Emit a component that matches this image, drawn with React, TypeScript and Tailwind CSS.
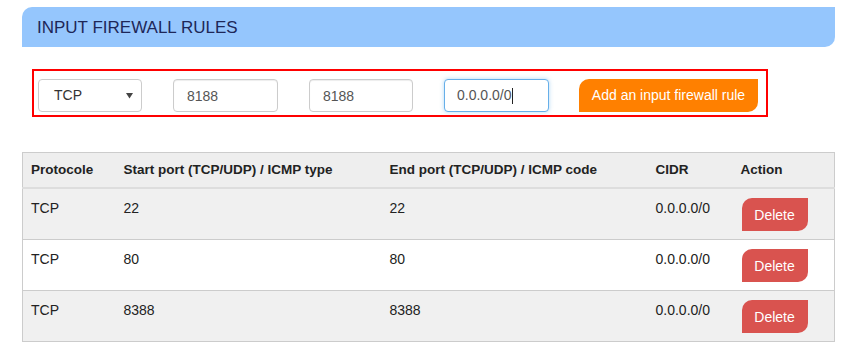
const rules = [
    { protocol: 'TCP', start: '22', end: '22', cidr: '0.0.0.0/0' },
    { protocol: 'TCP', start: '80', end: '80', cidr: '0.0.0.0/0' },
    { protocol: 'TCP', start: '8388', end: '8388', cidr: '0.0.0.0/0' },
]

function TextField({ value, width }: { value: string; width: string }) {
    return (
        <input
            readOnly
            value={value}
            className={`${width} h-[33px] rounded-[4px] border border-[#cccccc] bg-white pl-[13px] text-[14px] text-[#555555] shadow-[inset_0_1px_1px_rgba(0,0,0,0.075)] outline-none`}
        />
    )
}

export default function App() {
    return (
        <div className="min-h-screen bg-white font-['Liberation_Sans',Arial,sans-serif]">
            <div className="ml-[22px] w-[813px] pt-[7px]">
                {/* section header */}
                <div className="flex h-[40px] items-center rounded-tl-[10px] rounded-br-[10px] bg-[#95c6fd] pl-[15px]">
                    <h2 className="text-[17px] leading-none text-[#1e2758]">INPUT FIREWALL RULES</h2>
                </div>

                {/* add rule form */}
                <div className="ml-[10px] mt-[22px] flex h-[48px] w-[736px] items-start border-2 border-[#ff0000] pl-[4px] pt-[8px]">
                    <div className="flex h-[33px] w-[104px] items-center justify-between rounded-[4px] border border-[#cccccc] bg-white pl-[15px] pr-[8px] text-[14px] text-[#333333]">
                        <span>TCP</span>
                        <svg width="7" height="6" viewBox="0 0 7 6">
                            <path d="M0 0 H7 L3.5 5.5 Z" fill="#444444" />
                        </svg>
                    </div>
                    <div className="ml-[31px]">
                        <TextField value="8188" width="w-[105px]" />
                    </div>
                    <div className="ml-[31px]">
                        <TextField value="8188" width="w-[104px]" />
                    </div>
                    <div className="ml-[31px] flex h-[33px] w-[105px] items-center rounded-[4px] border border-[#66afe9] bg-white pl-[12px] text-[14px] text-[#555555] shadow-[0_0_4px_rgba(102,175,233,0.5)]">
                        <span>0.0.0.0/0</span>
                        <span className="h-[16px] w-px bg-[#222222]" />
                    </div>
                    <button className="ml-[30px] flex h-[33px] w-[179px] items-center justify-center rounded-tl-[10px] rounded-br-[10px] bg-[#ff8000] text-[14px] text-white">
                        Add an input firewall rule
                    </button>
                </div>

                {/* rules table */}
                <table className="mt-[35px] w-[813px] table-fixed border-collapse border border-[#cccccc] text-[14px] leading-[20px] text-[#222222]">
                    <colgroup>
                        <col className="w-[93px]" />
                        <col className="w-[266px]" />
                        <col className="w-[266px]" />
                        <col className="w-[85px]" />
                        <col />
                    </colgroup>
                    <thead>
                        <tr className="border-b-2 border-[#dddddd] bg-[#eeeeee] text-left">
                            <th className="px-[8px] py-[7px] text-[13.5px] font-bold">Protocole</th>
                            <th className="px-[8px] py-[7px] text-[13.5px] font-bold">Start port (TCP/UDP) / ICMP type</th>
                            <th className="px-[8px] py-[7px] text-[13.5px] font-bold">End port (TCP/UDP) / ICMP code</th>
                            <th className="px-[8px] py-[7px] text-[13.5px] font-bold">CIDR</th>
                            <th className="px-[8px] py-[7px] text-[13.5px] font-bold">Action</th>
                        </tr>
                    </thead>
                    <tbody>
                        {rules.map((rule, i) => (
                            <tr
                                key={i}
                                className={`border-b border-[#cccccc] align-top ${i % 2 === 0 ? 'bg-[#f0f0f0]' : 'bg-white'}`}
                            >
                                <td className="px-[8px] pt-[9px] pb-[8px]">{rule.protocol}</td>
                                <td className="px-[8px] pt-[9px] pb-[8px]">{rule.start}</td>
                                <td className="px-[8px] pt-[9px] pb-[8px]">{rule.end}</td>
                                <td className="px-[8px] pt-[9px] pb-[8px]">{rule.cidr}</td>
                                <td className="px-[8px] pt-[9px] pb-[8px]">
                                    <button className="ml-px flex h-[33px] w-[66px] items-center justify-center rounded-tl-[10px] rounded-br-[10px] bg-[#d9534f] text-[14px] text-white">
                                        Delete
                                    </button>
                                </td>
                            </tr>
                        ))}
                    </tbody>
                </table>
            </div>
        </div>
    )
}
